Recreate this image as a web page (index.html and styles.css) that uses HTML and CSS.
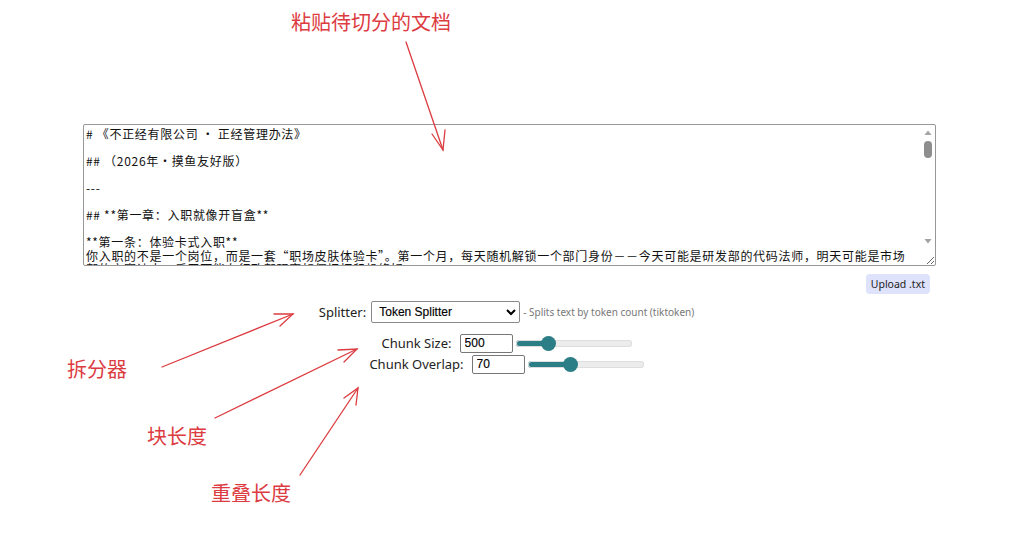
FILE: index.html
```html
<!DOCTYPE html>
<html lang="zh-CN">
<head>
<meta charset="utf-8">
<title>Text Splitter</title>
<link rel="stylesheet" href="styles.css">
</head>
<body>
<main class="app">
  <div class="doc-wrap">
    <textarea class="doc" spellcheck="false"># 《不正经有限公司 · 正经管理办法》

## （2026年·摸鱼友好版）

---

## **第一章：入职就像开盲盒**

**第一条：体验卡式入职**
你入职的不是一个岗位，而是一套“职场皮肤体验卡”。第一个月，每天随机解锁一个部门身份－－今天可能是研发部的代码法师，明天可能是市场部的文案诗人，后天可能在行政部研究如何把打印机修好。

**第二条：工牌即护身符**
工牌请随身携带，它可以打开大门、电梯和茶水间，但打不开老板的心。

## **第二章：上班就像打副本**

**第三条：弹性打卡**
打卡时间为九点到十点之间的任意时刻，迟到一分钟需在周会上讲一个冷笑话。
</textarea>
    <svg class="scrollbar" width="14" height="126" viewBox="0 0 14 126" aria-hidden="true">
      <path d="M3.5 10 L7 5.5 L10.5 10 Z" fill="#a3a3a3"/>
      <rect x="3" y="16" width="8" height="17" rx="4" fill="#8e8e8e"/>
      <path d="M3.5 114 L7 118.5 L10.5 114 Z" fill="#a3a3a3"/>
    </svg>
  </div>
  <div class="upload-row">
    <button class="upload" type="button">Upload .txt</button>
  </div>
  <section class="controls">
    <div class="row">
      <label class="label" for="splitter">Splitter:</label>
      <select id="splitter" class="select">
        <option>Token Splitter</option>
        <option>Character Splitter</option>
        <option>Recursive Splitter</option>
      </select>
      <span class="hint">- Splits text by token count (tiktoken)</span>
    </div>
    <div class="row tight">
      <label class="label" for="size">Chunk Size:</label>
      <input id="size" class="num" type="text" value="500">
      <input class="range" type="range" min="1" max="2000" value="500" style="--fill: 28%">
    </div>
    <div class="row tight">
      <label class="label" for="overlap">Chunk Overlap:</label>
      <input id="overlap" class="num" type="text" value="70">
      <input class="range" type="range" min="0" max="200" value="70" style="--fill: 33%">
    </div>
  </section>
</main>

<div class="notes" aria-hidden="true">
  <span class="note n-doc">粘贴待切分的文档</span>
  <span class="note n-split">拆分器</span>
  <span class="note n-size">块长度</span>
  <span class="note n-overlap">重叠长度</span>
  <svg class="arrows" width="1013" height="540" viewBox="0 0 1013 540">
    <g fill="none" stroke="#dc3b3f" stroke-width="1.3" stroke-linecap="round">
      <path d="M406 42 L443 150"/>
      <path d="M432 134 L443 150 L445 130"/>
      <path d="M162 367 L293 314"/>
      <path d="M274 314 L293 314 L280 326"/>
      <path d="M215 418 L357 349"/>
      <path d="M338 350 L357 349 L344 362"/>
      <path d="M300 475 L358 388"/>
      <path d="M344 398 L358 388 L356 405"/>
    </g>
  </svg>
</div>
</body>
</html>
```

FILE: styles.css
```css
html, body {
  margin: 0;
  padding: 0;
  background: #ffffff;
}

body {
  width: 1013px;
  height: 540px;
  overflow: hidden;
  position: relative;
  font-family: "Noto Sans", "Open Sans", sans-serif;
  color: #222;
}

.app {
  padding: 124px 77px 0 83px;
  display: flex;
  flex-direction: column;
}

.doc-wrap {
  position: relative;
  width: 853px;
  height: 142px;
}

.doc {
  display: block;
  box-sizing: border-box;
  width: 853px;
  height: 142px;
  margin: 0;
  padding: 2px 17px 2px 2px;
  border: 1px solid #979797;
  border-radius: 2px;
  font-family: "Noto Sans CJK SC", "Noto Sans", sans-serif;
  font-size: 12px;
  line-height: 13.5px;
  letter-spacing: 0.7px;
  color: #111;
  resize: vertical;
  overflow: hidden;
  outline: none;
}

.scrollbar {
  position: absolute;
  right: 1px;
  top: 1px;
}

.upload-row {
  display: flex;
  justify-content: flex-end;
  padding: 8px 6px 0 0;
}

.upload {
  font-family: "Noto Sans", "Open Sans", sans-serif;
  font-size: 10.5px;
  line-height: 14px;
  color: #222;
  background: #dfe2fb;
  border: none;
  border-radius: 4px;
  padding: 3px 5px;
  height: 20px;
  cursor: pointer;
}

.controls {
  display: flex;
  flex-direction: column;
  align-items: center;
  padding-top: 7px;
  margin-left: -83px;
  margin-right: -77px;
}

.row {
  display: flex;
  align-items: center;
  height: 22px;
  margin-bottom: 10px;
}

.row.tight {
  height: 20px;
  margin-bottom: 1px;
}

.label {
  font-size: 13px;
  color: #222;
  margin-right: 5px;
}

.row.tight .label {
  margin-right: 8px;
}

.select {
  box-sizing: border-box;
  width: 149px;
  height: 22px;
  font-family: "Liberation Sans", Arial, sans-serif;
  font-size: 12px;
  font-weight: normal;
  -webkit-text-stroke: 0.15px #000;
  color: #000;
  padding: 0 2px 0 3px;
  border: 1px solid #8a8a8a;
  border-radius: 2px;
  background: #fff;
}

.hint {
  margin-left: 3px;
  font-size: 10px;
  color: #777;
}

.num {
  box-sizing: border-box;
  width: 53px;
  height: 19px;
  padding: 1px 4px;
  border: 1px solid #777;
  border-radius: 2px;
  font-family: "Liberation Sans", Arial, sans-serif;
  font-size: 12px;
  font-weight: normal;
  -webkit-text-stroke: 0.15px #000;
  color: #000;
}

.range {
  -webkit-appearance: none;
  appearance: none;
  width: 116px;
  height: 7px;
  margin: 0 0 0 3px;
  border-radius: 4px;
  background: linear-gradient(to right, #2b7d86 0, #2b7d86 var(--fill), #ececec var(--fill), #ececec 100%);
  box-shadow: inset 0 0 0 1px #dedede;
  outline: none;
}

.range::-webkit-slider-thumb {
  -webkit-appearance: none;
  appearance: none;
  width: 15px;
  height: 15px;
  border-radius: 50%;
  background: #2b7d86;
  border: none;
}

.notes {
  position: absolute;
  inset: 0;
  pointer-events: none;
}

.arrows {
  position: absolute;
  left: 0;
  top: 0;
}

.note {
  position: absolute;
  font-family: "Noto Sans CJK SC", sans-serif;
  font-size: 20px;
  line-height: 24px;
  color: #dc3b3f;
  white-space: nowrap;
}

.n-doc { left: 291px; top: 10px; }
.n-split { left: 67px; top: 357px; }
.n-size { left: 147px; top: 424px; }
.n-overlap { left: 211px; top: 481px; }
```
